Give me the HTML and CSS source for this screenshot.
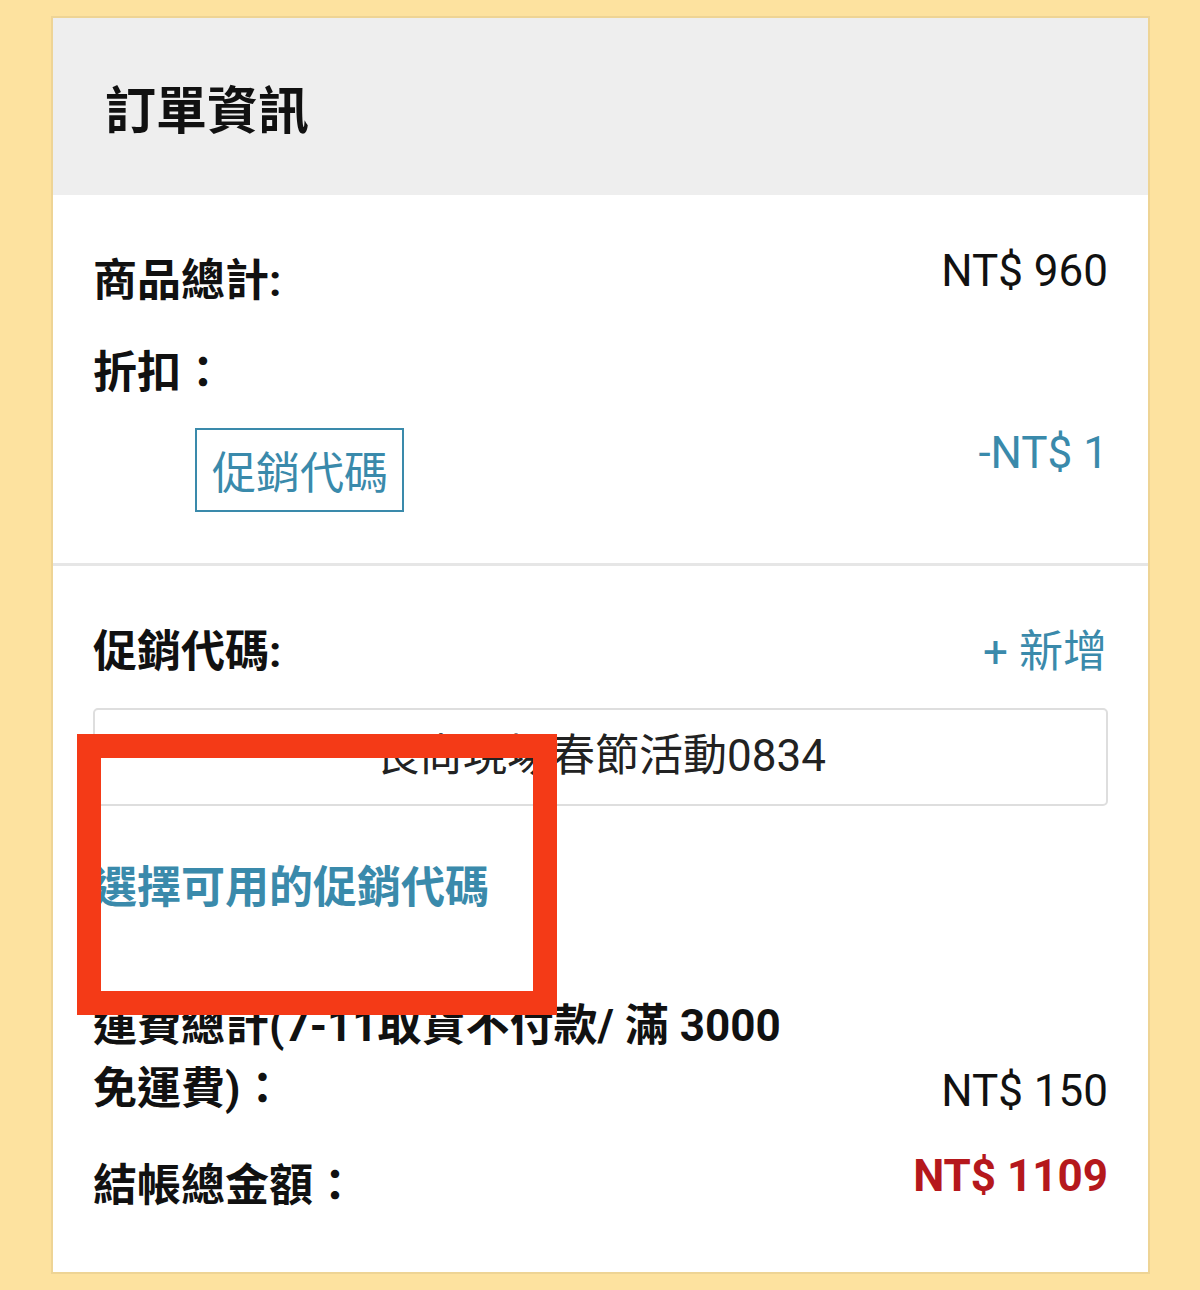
FILE: index.html
```html
<!DOCTYPE html>
<html lang="zh-Hant">
<head>
<meta charset="utf-8">
<title>訂單資訊</title>
<link rel="stylesheet" href="styles.css">
</head>
<body>
<div class="card">
  <div class="card-head">訂單資訊</div>

  <section class="block">
    <div class="row">
      <div class="label">商品總計:</div>
      <div class="value value-up">NT$ 960</div>
    </div>
    <div class="row row-discount">
      <div class="label">折扣：</div>
    </div>
    <div class="row row-promo">
      <div class="promo-tag">促銷代碼</div>
      <div class="value value-teal">-NT$ 1</div>
    </div>
  </section>

  <section class="block block-second">
    <div class="row">
      <div class="label">促銷代碼:</div>
      <div class="add-link">+ 新增</div>
    </div>
    <div class="code-field">長尚現場春節活動0834</div>
    <div class="pick-link">選擇可用的促銷代碼</div>
    <div class="row row-ship">
      <div class="label">運費總計(7-11取貨不付款/ 滿 3000<br>免運費)：</div>
      <div class="value value-end">NT$ 150</div>
    </div>
    <div class="row row-total">
      <div class="label">結帳總金額：</div>
      <div class="value value-total">NT$ 1109</div>
    </div>
  </section>

  <div class="highlight"></div>
</div>
</body>
</html>
```

FILE: styles.css
```css
html, body {
  margin: 0;
  padding: 0;
}

body {
  background: #fde29f;
  padding: 18px 52px 18px 53px;
  font-family: Roboto, "Noto Sans CJK TC", sans-serif;
  color: #111;
}

.card {
  position: relative;
  background: #fff;
  height: 1254px;
  box-shadow: 0 0 0 2px rgba(0, 0, 0, 0.06);
}

.card-head {
  height: 177px;
  background: #eeeeee;
  display: flex;
  align-items: center;
  padding-left: 52px;
  font-family: "Noto Sans CJK TC", sans-serif;
  font-weight: 700;
  font-size: 51px;
}

.block {
  padding: 55px 40px 51px 40px;
}

.block-second {
  border-top: 3px solid #e6e6e6;
  padding-top: 55px;
}

.row {
  display: flex;
  justify-content: space-between;
  align-items: flex-start;
}

.label {
  font-weight: 700;
  font-size: 44px;
  line-height: 63px;
}

.value {
  font-size: 44px;
  line-height: 63px;
}

.value-up {
  margin-top: -10px;
}

.row-discount {
  margin-top: 29px;
}

.row-promo {
  margin-top: 15px;
  padding-left: 102px;
}

.promo-tag {
  margin-top: 8px;
  border: 2px solid #3a8aab;
  color: #3a8aab;
  font-size: 44px;
  line-height: 63px;
  padding: 13px 14px 4px 15px;
}

.value-teal {
  margin-top: 2px;
  color: #3a8aab;
}

.add-link {
  color: #3a8aab;
  font-size: 44px;
  line-height: 63px;
  margin-right: 1px;
}

.code-field {
  margin-top: 24px;
  border: 2px solid #dedede;
  border-radius: 5px;
  padding: 15px 16px 16px;
  text-align: center;
  font-size: 44px;
  line-height: 63px;
  color: #222;
}

.pick-link {
  margin-top: 51px;
  color: #3a8aab;
  font-weight: 700;
  font-size: 44px;
  line-height: 63px;
}

.row-ship {
  margin-top: 75px;
  align-items: flex-end;
}

.value-end {
  margin-bottom: -2px;
}

.row-total {
  margin-top: 34px;
}

.value-total {
  margin-top: -10px;
  color: #b5181c;
  font-weight: 700;
}

/* annotation frame drawn over the promo list */
.highlight {
  position: absolute;
  left: 24px;
  top: 716px;
  width: 432px;
  height: 233px;
  border: 24px solid #f43a17;
  pointer-events: none;
}
```
